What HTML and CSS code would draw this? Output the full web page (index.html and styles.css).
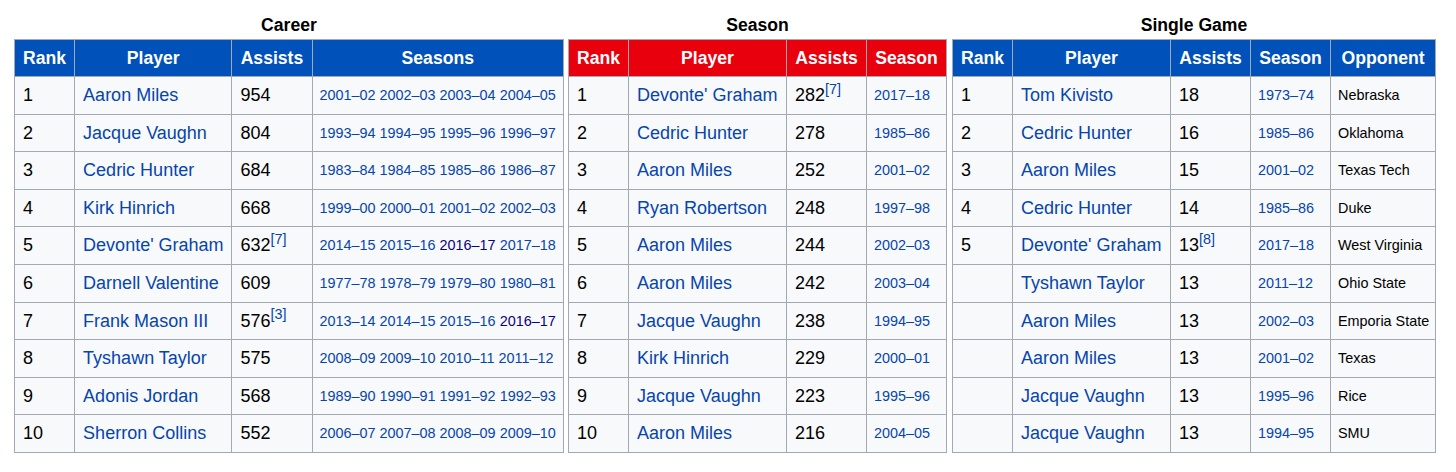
FILE: index.html
```html
<!DOCTYPE html>
<html lang="en">
<head>
<meta charset="utf-8">
<title>Kansas Jayhawks assists leaders</title>
<link rel="stylesheet" href="styles.css">
</head>
<body>
<div class="records">
  <table class="wikitable career">
    <caption>Career</caption>
    <colgroup>
      <col class="c-rank"><col class="c-player"><col class="c-assists"><col class="c-seasons">
    </colgroup>
    <thead>
      <tr><th>Rank</th><th>Player</th><th>Assists</th><th>Seasons</th></tr>
    </thead>
    <tbody>
      <tr><td>1</td><td><a>Aaron Miles</a></td><td>954</td><td class="sm"><a>2001–02</a> <a>2002–03</a> <a>2003–04</a> <a>2004–05</a></td></tr>
      <tr><td>2</td><td><a>Jacque Vaughn</a></td><td>804</td><td class="sm"><a>1993–94</a> <a>1994–95</a> <a>1995–96</a> <a>1996–97</a></td></tr>
      <tr><td>3</td><td><a>Cedric Hunter</a></td><td>684</td><td class="sm"><a>1983–84</a> <a>1984–85</a> <a>1985–86</a> <a>1986–87</a></td></tr>
      <tr><td>4</td><td><a>Kirk Hinrich</a></td><td>668</td><td class="sm"><a>1999–00</a> <a>2000–01</a> <a>2001–02</a> <a>2002–03</a></td></tr>
      <tr><td>5</td><td><a>Devonte' Graham</a></td><td>632<sup><a>[7]</a></sup></td><td class="sm"><a>2014–15</a> <a>2015–16</a> <a class="visited">2016–17</a> <a>2017–18</a></td></tr>
      <tr><td>6</td><td><a>Darnell Valentine</a></td><td>609</td><td class="sm"><a>1977–78</a> <a>1978–79</a> <a>1979–80</a> <a>1980–81</a></td></tr>
      <tr><td>7</td><td><a>Frank Mason III</a></td><td>576<sup><a>[3]</a></sup></td><td class="sm"><a>2013–14</a> <a>2014–15</a> <a>2015–16</a> <a class="visited">2016–17</a></td></tr>
      <tr><td>8</td><td><a>Tyshawn Taylor</a></td><td>575</td><td class="sm"><a>2008–09</a> <a>2009–10</a> <a>2010–11</a> <a>2011–12</a></td></tr>
      <tr><td>9</td><td><a>Adonis Jordan</a></td><td>568</td><td class="sm"><a>1989–90</a> <a>1990–91</a> <a>1991–92</a> <a>1992–93</a></td></tr>
      <tr><td>10</td><td><a>Sherron Collins</a></td><td>552</td><td class="sm"><a>2006–07</a> <a>2007–08</a> <a>2008–09</a> <a>2009–10</a></td></tr>
    </tbody>
  </table>

  <table class="wikitable season red">
    <caption>Season</caption>
    <colgroup>
      <col class="c-rank"><col class="c-player2"><col class="c-assists"><col class="c-season">
    </colgroup>
    <thead>
      <tr><th>Rank</th><th>Player</th><th>Assists</th><th>Season</th></tr>
    </thead>
    <tbody>
      <tr><td>1</td><td><a>Devonte' Graham</a></td><td>282<sup><a>[7]</a></sup></td><td class="sm"><a>2017–18</a></td></tr>
      <tr><td>2</td><td><a>Cedric Hunter</a></td><td>278</td><td class="sm"><a>1985–86</a></td></tr>
      <tr><td>3</td><td><a>Aaron Miles</a></td><td>252</td><td class="sm"><a>2001–02</a></td></tr>
      <tr><td>4</td><td><a>Ryan Robertson</a></td><td>248</td><td class="sm"><a>1997–98</a></td></tr>
      <tr><td>5</td><td><a>Aaron Miles</a></td><td>244</td><td class="sm"><a>2002–03</a></td></tr>
      <tr><td>6</td><td><a>Aaron Miles</a></td><td>242</td><td class="sm"><a>2003–04</a></td></tr>
      <tr><td>7</td><td><a>Jacque Vaughn</a></td><td>238</td><td class="sm"><a>1994–95</a></td></tr>
      <tr><td>8</td><td><a>Kirk Hinrich</a></td><td>229</td><td class="sm"><a>2000–01</a></td></tr>
      <tr><td>9</td><td><a>Jacque Vaughn</a></td><td>223</td><td class="sm"><a>1995–96</a></td></tr>
      <tr><td>10</td><td><a>Aaron Miles</a></td><td>216</td><td class="sm"><a>2004–05</a></td></tr>
    </tbody>
  </table>

  <table class="wikitable game">
    <caption>Single Game</caption>
    <colgroup>
      <col class="c-rank"><col class="c-player2"><col class="c-assists"><col class="c-season"><col class="c-opp">
    </colgroup>
    <thead>
      <tr><th>Rank</th><th>Player</th><th>Assists</th><th>Season</th><th>Opponent</th></tr>
    </thead>
    <tbody>
      <tr><td>1</td><td><a>Tom Kivisto</a></td><td>18</td><td class="sm"><a>1973–74</a></td><td class="sm">Nebraska</td></tr>
      <tr><td>2</td><td><a>Cedric Hunter</a></td><td>16</td><td class="sm"><a>1985–86</a></td><td class="sm">Oklahoma</td></tr>
      <tr><td>3</td><td><a>Aaron Miles</a></td><td>15</td><td class="sm"><a>2001–02</a></td><td class="sm">Texas Tech</td></tr>
      <tr><td>4</td><td><a>Cedric Hunter</a></td><td>14</td><td class="sm"><a>1985–86</a></td><td class="sm">Duke</td></tr>
      <tr><td>5</td><td><a>Devonte' Graham</a></td><td>13<sup><a>[8]</a></sup></td><td class="sm"><a>2017–18</a></td><td class="sm">West Virginia</td></tr>
      <tr><td></td><td><a>Tyshawn Taylor</a></td><td>13</td><td class="sm"><a>2011–12</a></td><td class="sm">Ohio State</td></tr>
      <tr><td></td><td><a>Aaron Miles</a></td><td>13</td><td class="sm"><a>2002–03</a></td><td class="sm">Emporia State</td></tr>
      <tr><td></td><td><a>Aaron Miles</a></td><td>13</td><td class="sm"><a>2001–02</a></td><td class="sm">Texas</td></tr>
      <tr><td></td><td><a>Jacque Vaughn</a></td><td>13</td><td class="sm"><a>1995–96</a></td><td class="sm">Rice</td></tr>
      <tr><td></td><td><a>Jacque Vaughn</a></td><td>13</td><td class="sm"><a>1994–95</a></td><td class="sm">SMU</td></tr>
    </tbody>
  </table>
</div>
</body>
</html>
```

FILE: styles.css
```css
html, body {
  margin: 0;
  padding: 0;
  background: #ffffff;
}

body {
  font-family: "Liberation Sans", Arial, Helvetica, sans-serif;
  color: #202122;
}

.records {
  display: flex;
  align-items: flex-start;
  padding: 14px 0 0 14px;
}

.wikitable {
  border-collapse: collapse;
  table-layout: fixed;
  background: #f8f9fa;
  border: 1px solid #a2a9b1;
  font-size: 18px;
}

.career { width: 550px; margin-right: 4px; }
.season { width: 379px; margin-right: 5px; }
.game { width: 484px; }

.c-rank { width: 60px; }
.c-player { width: 157px; }
.c-player2 { width: 158px; }
.c-assists { width: 80px; }
.c-seasons { width: 251px; }
.c-season { width: 80px; }
.c-opp { width: 105px; }

.wikitable caption {
  font-weight: bold;
  font-size: 17.6px;
  line-height: 22px;
  padding-bottom: 3px;
  color: #000;
  text-align: center;
}

.wikitable th,
.wikitable td {
  border: 1px solid #a2a9b1;
  padding: 8px 8px;
  line-height: 20.6px;
  height: 20.6px;
  white-space: nowrap;
  overflow: hidden;
}

.wikitable th {
  background: #0051ba;
  color: #ffffff;
  font-weight: bold;
  font-size: 17.6px;
  text-align: center;
  padding: 8px 4px;
  line-height: 20px;
  height: 20px;
}

.red th {
  background: #e8000d;
}

.wikitable td {
  text-align: left;
  color: #000;
}

.wikitable td.sm {
  font-size: 14.4px;
  padding-left: 7px;
  padding-right: 4px;
}

.wikitable a {
  color: #0645ad;
  text-decoration: none;
}

.wikitable a.visited {
  color: #0b0080;
}

.wikitable sup {
  font-size: 0.8em;
  line-height: 0;
  vertical-align: baseline;
  position: relative;
  top: -0.5em;
}
```
